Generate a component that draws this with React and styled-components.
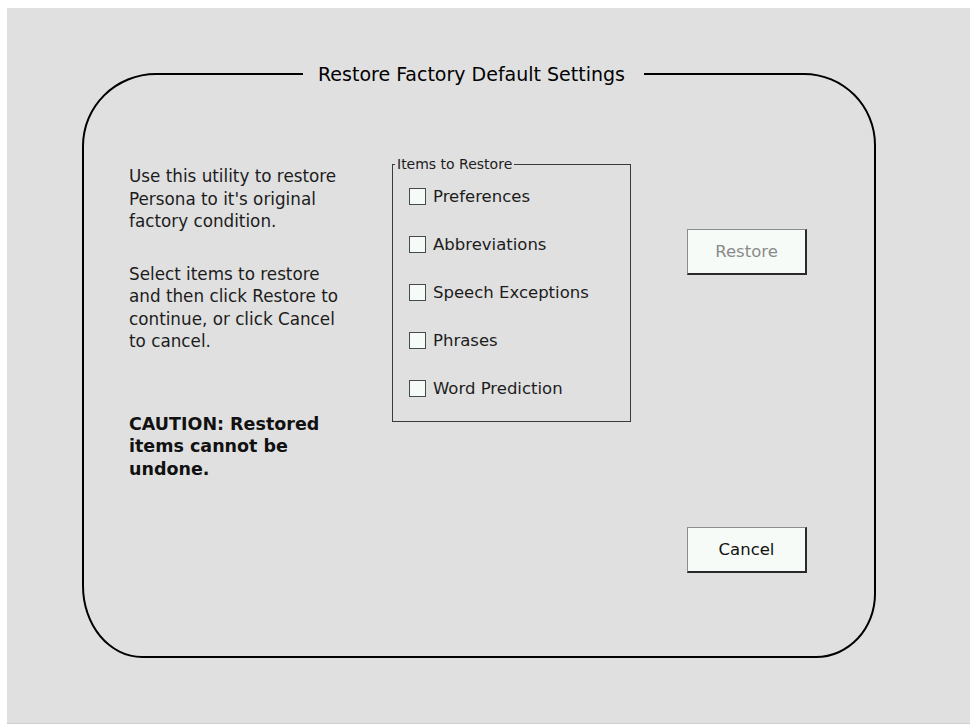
import React from 'react';
import styled, { createGlobalStyle } from 'styled-components';

const GlobalStyle = createGlobalStyle`
  html, body {
    margin: 0;
    padding: 0;
    background: #ffffff;
  }
  body {
    font-family: "DejaVu Sans", Verdana, sans-serif;
  }
`;

const Screen = styled.div`
  margin: 8px 0 0 7px;
  height: 660px;
  padding: 55px 0 0 75px;
  background: #e0e0e0;
  border-bottom: 1px solid #cdcdcd;
`;

// rounded outer frame, the corners are not quite even in the original
const Frame = styled.fieldset`
  margin: 0;
  padding: 0;
  width: 790px;
  border: 2px solid #000;
  border-radius: 74px 72px 60px 60px / 73px 72px 64px 72px;
  min-width: 0;
`;

// title sits a little left of centre on the top line
const Title = styled.legend`
  margin-left: 219px;
  padding: 0 19px 0 15px;
  font-size: 19px;
  line-height: 22px;
  color: #000;
`;

const Content = styled.div`
  height: 571px;
  display: grid;
  grid-template-columns: 263px 239px 56px 120px;
  align-items: start;
  padding-left: 45px;
`;

const Notes = styled.div`
  margin-top: 80px;
  font-size: 16.8px;
  line-height: 22.5px;
  color: #1c1c1c;
`;

const Note = styled.p`
  margin: 0 0 30px;
  font-weight: ${(p) => (p.$warn ? 700 : 400)};
  font-size: ${(p) => (p.$warn ? '17.5px' : 'inherit')};
  color: ${(p) => (p.$warn ? '#111' : 'inherit')};

  &:last-child {
    margin-top: 60px;
  }
`;

const Group = styled.fieldset`
  margin: 72px 0 0;
  padding: 14px 0 22px 0;
  border: 1px solid #3a3a3a;
  min-width: 0;
  display: flex;
  flex-direction: column;
  gap: 26px;
`;

const GroupLabel = styled.legend`
  margin-left: 2px;
  padding: 0 2px;
  font-size: 14px;
  line-height: 14px;
  color: #1c1c1c;
`;

const Row = styled.label`
  display: flex;
  align-items: center;
  height: 22px;
  padding-left: 16px;
  font-size: 16.5px;
  color: #1c1c1c;
`;

const Box = styled.input`
  appearance: none;
  margin: 0 7px 0 0;
  width: 17px;
  height: 17px;
  border: 1px solid #4a4a4a;
  background: #f5fbf6;
`;

const Actions = styled.div`
  grid-column: 4;
  display: flex;
  flex-direction: column;
  margin-top: 144px;
  gap: 252px;
`;

const Button = styled.button`
  width: 120px;
  height: 46px;
  padding: 0;
  font-family: inherit;
  font-size: 16.5px;
  color: ${(p) => (p.disabled ? '#8a8a8a' : '#111')};
  background: #f6fbf7;
  border-style: solid;
  border-width: 1px 2px 2px 1px;
  border-color: #8c8c8c #2a2a2a #2a2a2a #8c8c8c;
`;

const items = ['Preferences', 'Abbreviations', 'Speech Exceptions', 'Phrases', 'Word Prediction'];

const App = () => {
  return (
    <>
      <GlobalStyle />
      <Screen>
        <Frame>
          <Title>Restore Factory Default Settings</Title>
          <Content>
            <Notes>
              <Note>
                Use this utility to restore<br />
                Persona to it's original<br />
                factory condition.
              </Note>
              <Note>
                Select items to restore<br />
                and then click Restore to<br />
                continue, or click Cancel<br />
                to cancel.
              </Note>
              <Note $warn>
                CAUTION: Restored<br />
                items cannot be<br />
                undone.
              </Note>
            </Notes>

            <Group>
              <GroupLabel>Items to Restore</GroupLabel>
              {items.map((item) => (
                <Row key={item}>
                  <Box type="checkbox" />
                  {item}
                </Row>
              ))}
            </Group>

            <Actions>
              <Button disabled>Restore</Button>
              <Button>Cancel</Button>
            </Actions>
          </Content>
        </Frame>
      </Screen>
    </>
  );
};

export default App;
